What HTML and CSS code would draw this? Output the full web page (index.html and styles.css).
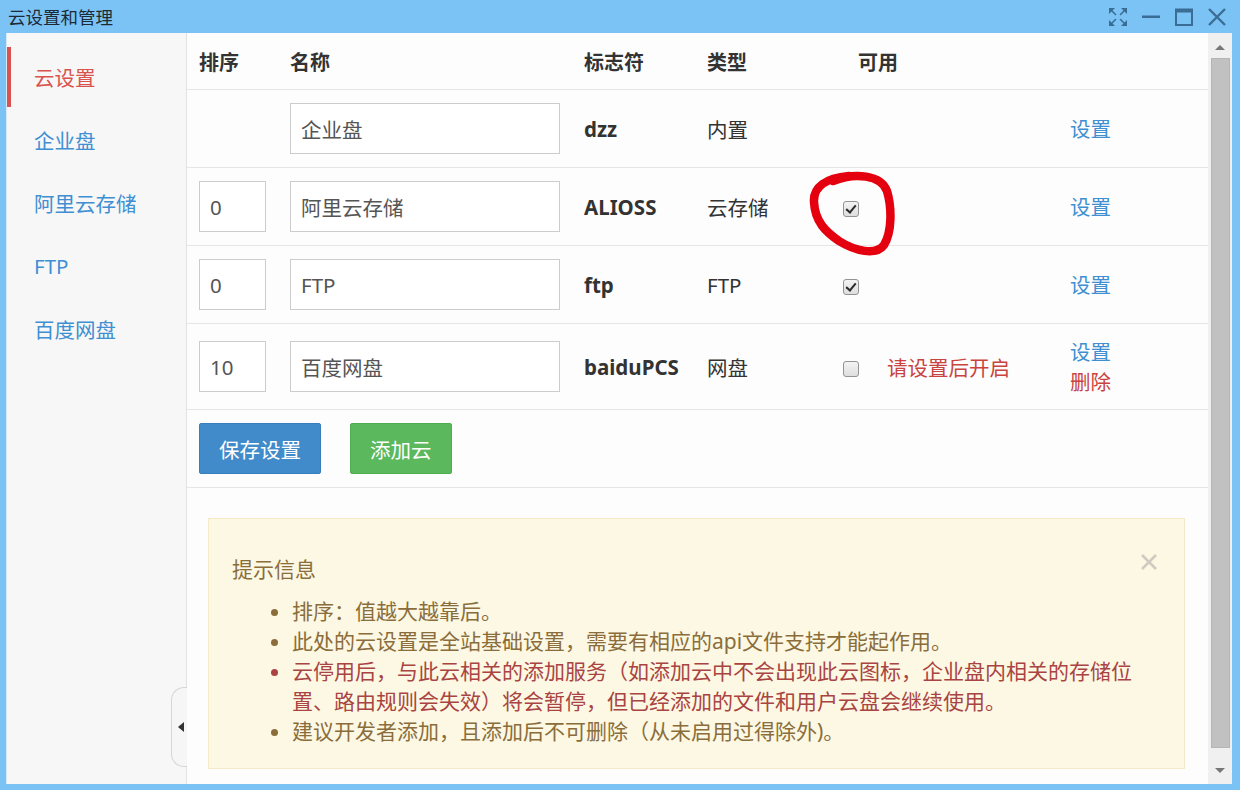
FILE: index.html
```html
<!DOCTYPE html>
<html lang="zh-CN">
<head>
<meta charset="utf-8">
<title>云设置和管理</title>
<link rel="stylesheet" href="styles.css">
</head>
<body>
<div class="window">
  <div class="titlebar">
    <span class="title">云设置和管理</span>
    <div class="win-ctrls">
      <svg class="ico" viewBox="0 0 18 18" width="18" height="18">
        <g fill="#3a6d93" stroke="#3a6d93" stroke-width="1.6" stroke-linecap="round">
          <polygon points="0,0 6,0 0,6" stroke="none"/>
          <line x1="2" y1="2" x2="6.5" y2="6.5"/>
          <polygon points="18,0 12,0 18,6" stroke="none"/>
          <line x1="16" y1="2" x2="11.5" y2="6.5"/>
          <polygon points="0,18 6,18 0,12" stroke="none"/>
          <line x1="2" y1="16" x2="6.5" y2="11.5"/>
          <polygon points="18,18 12,18 18,12" stroke="none"/>
          <line x1="16" y1="16" x2="11.5" y2="11.5"/>
        </g>
      </svg>
      <svg class="ico" viewBox="0 0 18 18" width="18" height="18">
        <rect x="0" y="7.5" width="18" height="2.5" fill="#3a6d93"/>
      </svg>
      <svg class="ico" viewBox="0 0 18 18" width="18" height="18">
        <rect x="1" y="1.5" width="16" height="15.5" fill="none" stroke="#3a6d93" stroke-width="2"/>
        <rect x="1" y="1" width="16" height="3.5" fill="#3a6d93"/>
      </svg>
      <svg class="ico" viewBox="0 0 18 18" width="18" height="18">
        <path d="M1 1L17 17M17 1L1 17" stroke="#3a6d93" stroke-width="2.4" fill="none"/>
      </svg>
    </div>
  </div>
  <div class="frame">
    <nav class="sidebar">
      <a class="nav-item active">云设置</a>
      <a class="nav-item">企业盘</a>
      <a class="nav-item">阿里云存储</a>
      <a class="nav-item">FTP</a>
      <a class="nav-item">百度网盘</a>
      <div class="collapse-tab"><span class="tri"></span></div>
    </nav>
    <main class="main">
      <div class="content">
        <div class="row head">
          <div>排序</div>
          <div>名称</div>
          <div>标志符</div>
          <div>类型</div>
          <div class="h-avail">可用</div>
          <div></div>
        </div>
        <div class="row">
          <div></div>
          <div><input class="inp name" type="text" value="企业盘"></div>
          <div class="ident">dzz</div>
          <div class="type">内置</div>
          <div></div>
          <div class="acts"><a class="link">设置</a></div>
        </div>
        <div class="row">
          <div><input class="inp sort" type="text" value="0"></div>
          <div><input class="inp name" type="text" value="阿里云存储"></div>
          <div class="ident">ALIOSS</div>
          <div class="type">云存储</div>
          <div class="avail"><input class="cb" type="checkbox" checked></div>
          <div class="acts"><a class="link">设置</a></div>
        </div>
        <div class="row">
          <div><input class="inp sort" type="text" value="0"></div>
          <div><input class="inp name" type="text" value="FTP"></div>
          <div class="ident">ftp</div>
          <div class="type">FTP</div>
          <div class="avail"><input class="cb" type="checkbox" checked></div>
          <div class="acts"><a class="link">设置</a></div>
        </div>
        <div class="row tall">
          <div><input class="inp sort" type="text" value="10"></div>
          <div><input class="inp name" type="text" value="百度网盘"></div>
          <div class="ident">baiduPCS</div>
          <div class="type">网盘</div>
          <div class="avail"><input class="cb" type="checkbox"><span class="warn">请设置后开启</span></div>
          <div class="acts stack"><a class="link">设置</a><a class="link danger">删除</a></div>
        </div>
        <div class="btn-row">
          <button class="btn primary">保存设置</button>
          <button class="btn success">添加云</button>
        </div>
        <div class="alert">
          <span class="close"><svg viewBox="0 0 18 18" width="18" height="18"><path d="M2 2L16 16M16 2L2 16" stroke="#cfcbc1" stroke-width="2.6" fill="none"/></svg></span>
          <div class="alert-title">提示信息</div>
          <ul class="tips">
            <li>排序：值越大越靠后。</li>
            <li>此处的云设置是全站基础设置，需要有相应的api文件支持才能起作用。</li>
            <li class="red">云停用后，与此云相关的添加服务（如添加云中不会出现此云图标，企业盘内相关的存储位置、路由规则会失效）将会暂停，但已经添加的文件和用户云盘会继续使用。</li>
            <li>建议开发者添加，且添加后不可删除（从未启用过得除外)。</li>
          </ul>
        </div>
      </div>
      <div class="scrollbar">
        <span class="sb-up"></span>
        <span class="sb-thumb"></span>
        <span class="sb-down"></span>
      </div>
    </main>
  </div>
  <svg class="annot" viewBox="0 0 95 95" width="95" height="95">
    <path d="M28 13 C50 4 76 7 82 23 C87 40 87 64 79 77 C71 88 50 83 34 73 C21 64 10 54 9 34 C8 19 21 10 44 8" fill="none" stroke="#e4000e" stroke-width="8.5" stroke-linecap="round" stroke-linejoin="round"/>
  </svg>
</div>
</body>
</html>
```

FILE: styles.css
```css
html, body {
  margin: 0;
  padding: 0;
}
body {
  font-family: "Noto Sans", "Noto Sans CJK SC", sans-serif;
  color: #333;
}
.window {
  position: relative;
  width: 1240px;
  height: 790px;
  box-sizing: border-box;
  padding: 0 8px 6px 6px;
  background: #7cc3f5;
  display: flex;
  flex-direction: column;
  overflow: hidden;
}
.titlebar {
  height: 33px;
  flex: none;
  display: flex;
  align-items: center;
  justify-content: space-between;
  padding-left: 2px;
}
.title {
  font-size: 17.5px;
  color: #1c2a36;
  font-family: "Noto Sans CJK SC", sans-serif;
}
.win-ctrls {
  display: flex;
  gap: 15px;
  margin-right: 6px;
  margin-top: 1px;
}
.ico {
  display: block;
}
.frame {
  flex: 1;
  display: flex;
  min-height: 0;
  background: #fdfdfd;
}
.sidebar {
  position: relative;
  width: 179px;
  flex: none;
  background: #f7f7f7;
  border-left: 1px solid #d5e9f8;
  border-right: 1px solid #e2e2e2;
  padding-top: 14px;
  box-sizing: content-box;
}
.nav-item {
  display: flex;
  align-items: center;
  height: 60px;
  margin-bottom: 3px;
  padding-left: 27px;
  font-size: 20.5px;
  color: #3f8fd2;
  font-family: "Noto Sans", "Noto Sans CJK SC", sans-serif;
}
.nav-item.active {
  color: #d9534f;
  border-left: 4px solid #d9534f;
  padding-left: 23px;
}
.collapse-tab {
  position: absolute;
  right: -1px;
  top: 654px;
  width: 15px;
  height: 78px;
  border: 1px solid #d6d6d6;
  border-right: none;
  border-radius: 13px 0 0 13px;
  background: #f6f6f6;
  display: flex;
  align-items: center;
  justify-content: center;
}
.tri {
  width: 0;
  height: 0;
  border-top: 5px solid transparent;
  border-bottom: 5px solid transparent;
  border-right: 6px solid #333;
  margin-left: 2px;
}
.main {
  flex: 1;
  display: flex;
  min-width: 0;
  background: #fdfdfd;
}
.content {
  flex: 1;
  min-width: 0;
}
.row {
  display: grid;
  grid-template-columns: 91px 294px 123px 136px 227px 1fr;
  align-items: center;
  padding-left: 12px;
  height: 77px;
  border-bottom: 1px solid #e6e6e6;
  font-size: 20.5px;
}
.row.head {
  height: 56px;
  font-weight: 700;
  color: #333;
  font-size: 20px;
}
.row.tall {
  height: 85px;
}
.h-avail {
  padding-left: 15px;
}
.inp {
  display: block;
  box-sizing: border-box;
  height: 51px;
  border: 1px solid #cccccc;
  border-radius: 0;
  background: #fff;
  padding: 0 10px;
  font-family: "Noto Sans", "Noto Sans CJK SC", sans-serif;
  font-size: 20.5px;
  color: #555;
  outline: none;
  margin: 0;
}
.inp.sort {
  width: 67px;
}
.inp.name {
  width: 270px;
}
.ident {
  font-weight: 700;
  font-size: 20.5px;
  color: #333;
}
.type {
  color: #333;
}
.avail {
  display: flex;
  align-items: center;
  gap: 28px;
}
.cb {
  appearance: none;
  -webkit-appearance: none;
  width: 16px;
  height: 16px;
  margin: 0;
  border: 1px solid #939393;
  border-radius: 3px;
  background: linear-gradient(#f3f3f3, #dedede);
  position: relative;
  flex: none;
  top: 2px;
}
.cb:checked::after {
  content: "";
  position: absolute;
  left: 4px;
  top: 1px;
  width: 4px;
  height: 8px;
  border-right: 2.5px solid #2b2b2b;
  border-bottom: 2.5px solid #2b2b2b;
  transform: rotate(40deg);
}
.warn {
  color: #c9433f;
  font-size: 20.5px;
}
.acts {
  display: flex;
  flex-direction: column;
  line-height: 30px;
}
.link {
  color: #3f8fd2;
  font-size: 20.5px;
}
.link.danger {
  color: #c9433f;
}
.btn-row {
  display: flex;
  align-items: center;
  gap: 29px;
  height: 77px;
  padding-left: 12px;
  border-bottom: 1px solid #e6e6e6;
}
.btn {
  height: 51px;
  padding: 0 19px;
  border-radius: 2px;
  font-family: "Noto Sans", "Noto Sans CJK SC", sans-serif;
  font-size: 20.5px;
  color: #fff;
  cursor: pointer;
}
.btn.primary {
  background: #428bca;
  border: 1px solid #3a7fbd;
}
.btn.success {
  background: #5cb85c;
  border: 1px solid #4fae4f;
}
.alert {
  position: relative;
  margin: 30px 23px 0 21px;
  height: 251px;
  box-sizing: border-box;
  background: #fcf8e3;
  border: 1px solid #f5e9c8;
  padding: 35px 40px 0 23px;
  color: #8a6d3b;
}
.close {
  position: absolute;
  right: 26px;
  top: 34px;
  display: block;
  line-height: 0;
}
.alert-title {
  font-size: 21px;
  line-height: 30px;
}
.tips {
  margin: 12px 0 0;
  padding-left: 60px;
  font-size: 21px;
  line-height: 30px;
}
.tips li.red {
  color: #a94442;
}
.scrollbar {
  width: 24px;
  flex: none;
  background: #f0f0f0;
  display: flex;
  flex-direction: column;
  align-items: center;
}
.sb-up, .sb-down {
  width: 0;
  height: 0;
  border-left: 5px solid transparent;
  border-right: 5px solid transparent;
}
.sb-up {
  border-bottom: 5px solid #777;
  margin-top: 12px;
}
.sb-thumb {
  width: 19px;
  height: 690px;
  margin-top: 8px;
  background: #c1c1c1;
  border: 1px solid #b5b5b5;
  box-sizing: border-box;
}
.sb-down {
  border-top: 5px solid #777;
  margin-top: 20px;
}
.annot {
  position: absolute;
  left: 805px;
  top: 168px;
}
```
